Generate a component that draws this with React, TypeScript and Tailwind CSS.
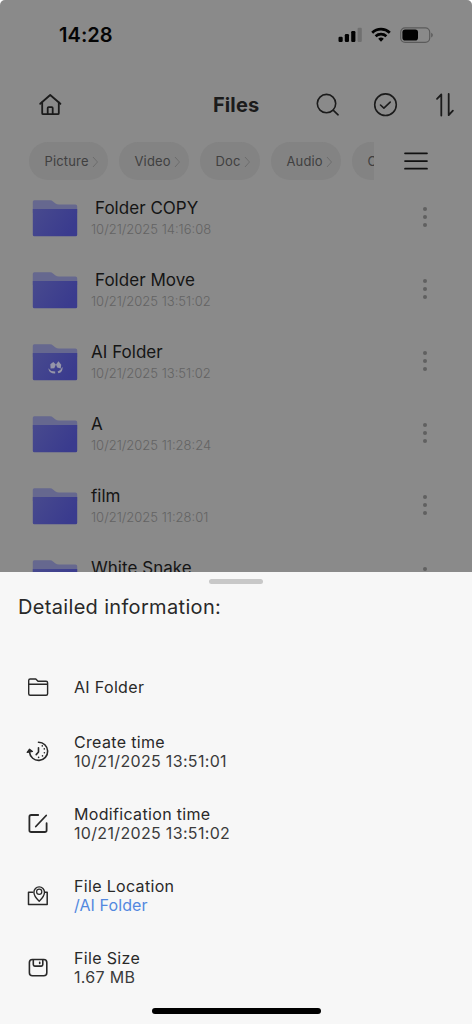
import type { ReactNode } from "react";

const folders = [
  { name: "Folder COPY", date: "10/21/2025 14:16:08", indent: true },
  { name: "Folder Move", date: "10/21/2025 13:51:02", indent: true },
  { name: "AI Folder", date: "10/21/2025 13:51:02", synced: true },
  { name: "A", date: "10/21/2025 11:28:24" },
  { name: "film", date: "10/21/2025 11:28:01" },
  { name: "White Snake" },
];

const chips = [
  { label: "Picture", width: "w-[79px]" },
  { label: "Video", width: "w-[70px]" },
  { label: "Doc", width: "w-[60px]" },
  { label: "Audio", width: "w-[70px]" },
  { label: "Other", width: "w-[70px]" },
];

const StatusBar = () => (
  <div className="flex h-[70px] items-center justify-between pl-[59px] pr-[38px]">
    <span className="text-[20px] font-semibold leading-6 tracking-[0.05px] text-[#050505]">
      14:28
    </span>
    <svg width="96" height="20" viewBox="0 0 96 20" fill="none">
      <rect x="0.5" y="11.7" width="4.2" height="5.3" rx="1.2" fill="#020202" />
      <rect x="6.8" y="9" width="4.2" height="8" rx="1.2" fill="#020202" />
      <rect x="13.2" y="6" width="4.2" height="11" rx="1.2" fill="#020202" />
      <rect x="19.6" y="2.8" width="4.2" height="14.2" rx="1.2" fill="#707070" />
      <path d="M34.2 7.7a12.8 12.8 0 0 1 17.6 0" stroke="#020202" strokeWidth="2.8" />
      <path d="M37.6 11.2a8 8 0 0 1 10.8 0" stroke="#020202" strokeWidth="2.7" />
      <path d="M40.2 13.8a4.3 4.3 0 0 1 5.6 0L43 16.8z" fill="#020202" />
      <rect x="62.7" y="2.8" width="29" height="14.6" rx="4.4" stroke="#5b5b5b" strokeWidth="1.2" />
      <rect x="64.4" y="4.6" width="15.6" height="11" rx="2.8" fill="#020202" />
      <path d="M93.2 7.8c2.1.8 2.1 3.8 0 4.6z" fill="#5b5b5b" />
    </svg>
  </div>
);

const TitleBar = () => (
  <div className="flex h-[70px] items-center text-[#1b1b1b]">
    <svg className="ml-[38px]" width="24" height="24" viewBox="0 0 24 24" fill="none" stroke="currentColor" strokeWidth="1.8" strokeLinecap="round" strokeLinejoin="round">
      <path d="M2.2 10.8 12.2 2l10.2 8.8" />
      <path d="M4.2 9.3v10.9q0 1 1 1h14.6q1 0 1-1V9.3" />
      <path d="M9.7 21v-6q0-.9.9-.9h3.2q.9 0 .9.9v6" />
    </svg>
    <h1 className="ml-[151px] w-[48px] whitespace-nowrap text-[20px] font-bold leading-6 tracking-[0.1px] text-[#1b1b1b]">
      Files
    </h1>
    <svg className="ml-[55px]" width="24" height="24" viewBox="0 0 24 24" fill="none" stroke="currentColor" strokeWidth="1.6" strokeLinecap="round">
      <circle cx="10.5" cy="10.6" r="9.2" />
      <path d="m17.4 17.3 4.7 4.5" />
    </svg>
    <svg className="ml-[33px]" width="25" height="24" viewBox="0 0 25 24" fill="none" stroke="currentColor" strokeWidth="1.6" strokeLinecap="round" strokeLinejoin="round">
      <circle cx="12.5" cy="11.7" r="10.8" />
      <path d="m7.5 12 3.4 3.1 6.3-6" />
    </svg>
    <svg className="ml-[37px]" width="20" height="24" viewBox="0 0 20 24" fill="none" stroke="currentColor" strokeWidth="1.8" strokeLinecap="round" strokeLinejoin="round">
      <path d="M6.3 22.5V1.5L2 5.8" />
      <path d="M13.7 1v21.2l4.2-4.6" />
    </svg>
  </div>
);

const FilterBar = () => (
  <div className="flex h-[42px] items-center pl-[29px]">
    <div className="flex w-[345px] gap-[11px] overflow-hidden">
      {chips.map((chip) => (
        <button
          key={chip.label}
          className={`flex h-[38px] shrink-0 items-center rounded-full bg-[#838383] pl-[15.5px] pt-px text-[13px] tracking-[0.15px] text-[#404040] ${chip.width}`}
        >
          {chip.label}
          <svg className="ml-[3px] shrink-0" width="7" height="12" viewBox="0 0 7 12" fill="none" stroke="#6d6d6d" strokeWidth="1">
            <path d="m1 1 4.5 5L1 11" />
          </svg>
        </button>
      ))}
    </div>
    <svg className="ml-[30px]" width="24" height="20" viewBox="0 0 24 20" fill="none" stroke="#111" strokeWidth="1.7" strokeLinecap="round">
      <path d="M1 2.3h22M1 10.1h22M1 17.7h22" />
    </svg>
  </div>
);

const FolderImage = ({ synced }: { synced?: boolean }) => (
  <svg width="46" height="38" viewBox="0 0 46 38" fill="none">
    <defs>
      <linearGradient id="front" x1="0" y1="0" x2="1" y2="0.4">
        <stop offset="0" stopColor="#484a8e" />
        <stop offset="1" stopColor="#3a3b8e" />
      </linearGradient>
    </defs>
    <path d="M.8 1.8Q.8.3 2.3.3h15.5q2 0 3.5 1.4l2.2 1.7q1.4 1 3.4 1h16.5q1.8 0 1.8 1.8V13H.8z" fill="#66688f" />
    <path d="M.8 9.1H45.2v25.7q0 1.5-1.5 1.5H2.3q-1.5 0-1.5-1.5z" fill="url(#front)" />
    {synced && (
      <g fill="#9595a8">
        <path d="m18.3 20.2 3-2.3 2.6 2.5-1.6 3.8-3.7.4z" />
        <path d="m24 20.5 2.5-3.2 2.7 3.5-.4 3.6-3.6-1z" />
        <path d="m16.2 24.3 3 2.8 4 .5v1.9q-6 .2-7-5.2M30.4 22.8q1 5.4-4 6.5l-.8-1.7q3.3-1 4.8-4.8" />
      </g>
    )}
  </svg>
);

const FolderRow = ({ name, date, indent, synced }: { name: string; date?: string; indent?: boolean; synced?: boolean }) => (
  <li className="flex h-[72px] shrink-0 items-start pl-8">
    <div className="mt-[17.5px]">
      <FolderImage synced={synced} />
    </div>
    <div className="ml-[13px] mt-[15px] w-[300px]">
      <p className={`text-[17px] leading-[22px] tracking-[0.03px] text-[#151515] ${indent ? "pl-1" : ""}`}>{name}</p>
      {date && <p className="text-[13px] font-light leading-[20px] text-[#636363]">{date}</p>}
    </div>
    <div className="ml-[32px] mt-[25px] flex flex-col gap-1">
      <span className="size-[4px] rounded-full bg-[#606060]" />
      <span className="size-[4px] rounded-full bg-[#606060]" />
      <span className="size-[4px] rounded-full bg-[#606060]" />
    </div>
  </li>
);

const Icon = ({ children }: { children: ReactNode }) => (
  <svg width="24" height="24" viewBox="0 0 24 24" fill="none" stroke="#292929" strokeWidth="1.6" strokeLinecap="round" strokeLinejoin="round">
    {children}
  </svg>
);

const details = [
  {
    label: "AI Folder",
    icon: (
      <Icon>
        <path d="M2.7 17.8V4.5q0-1.5 1.5-1.5h5.6L12 5.2h8.1q1.5 0 1.5 1.5v11.1q0 1.5-1.5 1.5H4.2q-1.5 0-1.5-1.5M2.7 8.3h18.9" strokeWidth="1.4" />
      </Icon>
    ),
  },
  {
    label: "Create time",
    value: "10/21/2025 13:51:01",
    icon: (
      <Icon>
        <path d="M12.5 2.2a9.1 9.1 0 1 1-9 10" />
        <path d="m1.2 12.4 2.3-3.2 3 2.3z" fill="#292929" strokeWidth="1.2" />
        <path d="M12.5 7.7v4.3l-2.3 2.6" />
        <path d="M16.3 5.9v.1M18.3 8.9v.1M18.4 12.7v.1M16.5 15.9v.1M12.6 17.4v.1" />
      </Icon>
    ),
  },
  {
    label: "Modification time",
    value: "10/21/2025 13:51:02",
    icon: (
      <Icon>
        <path d="M12.2 3H5.2q-1.8 0-1.8 1.8v13.4q0 1.8 1.8 1.8h13.6q1.8 0 1.8-1.8v-7M9.8 14.5 20.2 3.5" strokeWidth="1.8" />
      </Icon>
    ),
  },
  {
    label: "File Location",
    value: "/AI Folder",
    link: true,
    icon: (
      <Icon>
        <path d="M6.7 8.3H2.5v12.2h18.7V8.3h-2.4" strokeWidth="1.5" />
        <path d="M13.2 17.2q-5.3-5-5.3-9a5.3 5.3 0 0 1 10.6 0q0 4-5.3 9z" strokeWidth="1.4" />
        <circle cx="13.2" cy="7.8" r="2.6" strokeWidth="1.2" />
      </Icon>
    ),
  },
  {
    label: "File Size",
    value: "1.67 MB",
    icon: (
      <Icon>
        <rect x="3.4" y="3.5" width="17.4" height="16.2" rx="3" />
        <path d="M7.3 3.7v4.9q0 1.5 1.5 1.5h6.5q1.5 0 1.5-1.5V3.7M13.7 6.3v1.2" />
      </Icon>
    ),
  },
];

const DetailSheet = () => (
  <section className="flex h-[452px] flex-col bg-[#f7f7f7] text-[#292929]">
    <div className="mx-auto mt-[7px] h-[5px] w-[54px] rounded-full bg-[#c8c8c8]" />
    <h2 className="ml-[18px] mt-[10px] text-[20px] leading-[26px] tracking-[0.33px]">Detailed information:</h2>
    <ul className="mt-[39px] flex flex-col">
      {details.map((item) => (
        <li key={item.label} className={`flex items-center pl-[26px] ${item.value ? "h-[72.1px]" : "h-[57px]"}`}>
          {item.icon}
          <div className="ml-6 text-[16px] leading-[19px] tracking-[0.33px]">
            <p>{item.label}</p>
            {item.value && <p className={item.link ? "tracking-[0.1px] text-[#5288df]" : "text-[#3b3b3b]"}>{item.value}</p>}
          </div>
        </li>
      ))}
    </ul>
    <div className="mx-auto mb-[10px] mt-auto h-[6px] w-[169px] rounded-full bg-black" />
  </section>
);

const App = () => (
  <div className="flex h-[1024px] w-[472px] flex-col overflow-hidden bg-white font-['Inter',sans-serif]">
    <main className="h-[572px] overflow-hidden rounded-t-[5px] bg-[#8a8a8a]">
      <StatusBar />
      <TitleBar />
      <FilterBar />
      <ul className="flex flex-col">
        {folders.map((folder) => (
          <FolderRow key={folder.name} {...folder} />
        ))}
      </ul>
    </main>
    <DetailSheet />
  </div>
);

export default App;
